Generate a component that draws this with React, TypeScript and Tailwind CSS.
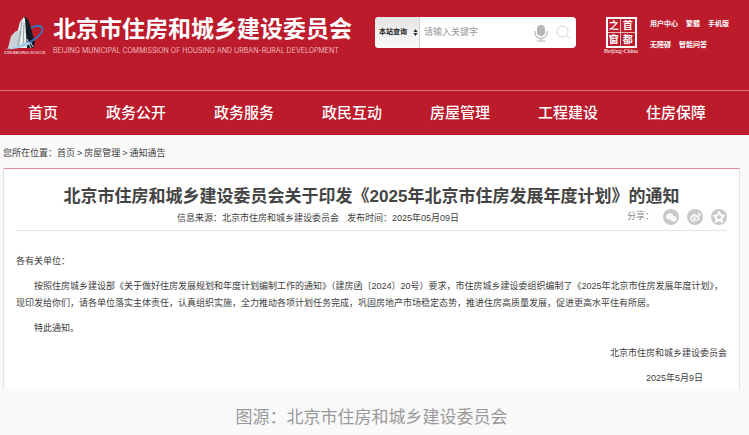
import { FaWeixin, FaWeibo } from "react-icons/fa";
import { TbStar } from "react-icons/tb";

const navItems = ["首页", "政务公开", "政务服务", "政民互动", "房屋管理", "工程建设", "住房保障"];

const topLinks = [
  ["用户中心", "繁體", "手机版"],
  ["无障碍", "智能问答"],
];

const shareLinks = [
  { name: "微信", icon: <FaWeixin size={11} /> },
  { name: "微博", icon: <FaWeibo size={11} /> },
  { name: "QQ空间", icon: <TbStar size={12} strokeWidth={4} /> },
];

const Logo = () => (
  <a href="#" className="flex w-[45px] flex-none flex-col items-center text-white">
    <svg width="42" height="33" viewBox="0 0 42 33" aria-hidden="true">
      <path d="M20 0h2l3 4 6 22-2 5H19z" fill="#111c24" />
      <path d="M20 0 16 5 9 31h14L21 2z" fill="#e9f1f1" />
      <path d="m12 14-5 5-3 12h11l3-17z" fill="#c9d3d6" />
      <path d="m18 4-4 26M20 6l-1 24" stroke="#8d9ea5" strokeWidth="1" fill="none" />
      <path d="m23 22 4 9M26 24l3 6" stroke="#d7dddd" strokeWidth="1" fill="none" />
      <path d="M27 11c5-3 10-3 11 0 2 4-6 12-18 17" fill="none" stroke="#3275bd" strokeWidth="1.8" />
      <path d="M28 26C20 31 8 33 1 32c7-1 15-4 21-7z" fill="#a9d1e5" />
    </svg>
    <span className="text-[4px] leading-[5px] whitespace-nowrap">ZJW.BEIJING.GOV.CN</span>
  </a>
);

const Search = () => (
  <form className="flex h-[31px] w-[201px] flex-none overflow-hidden rounded-[4px] bg-white">
    <label className="flex w-[45px] items-center border-r border-[#d5d5d5] bg-linear-to-b from-[#e4e4e4] to-[#fafafa]">
      <select aria-label="搜索范围" className="w-[34px] flex-none appearance-none pl-1 text-[7px] font-bold text-[#222]">
        <option>本站查询</option>
      </select>
      <svg width="5" height="7" viewBox="0 0 5 7" className="ml-1" fill="#222" aria-hidden="true">
        <path d="M2.5 0 4.5 3h-4zM2.5 7l-2-3h4z" />
      </svg>
    </label>
    <input aria-label="关键字" placeholder="请输入关键字" className="min-w-0 flex-1 pl-1 text-[9px] outline-none placeholder:text-[#999]" />
    <button type="button" aria-label="语音搜索" className="mr-2">
      <svg width="14" height="18" viewBox="0 0 14 18" fill="none" stroke="#b5b5b5" strokeWidth="1.2">
        <rect x="3" y="1" width="8" height="11" rx="4" fill="#b5b5b5" stroke="none" />
        <path d="M1 7v2c0 7 12 7 12 0V7M7 14v3M2.5 17h9" />
      </svg>
    </button>
    <button type="button" aria-label="搜索" className="mr-[5px]">
      <svg width="15" height="15" viewBox="0 0 15 15" fill="none" stroke="#d2d2d2" strokeWidth="1">
        <circle cx="6.5" cy="6.5" r="5.5" />
        <path d="m10.5 10.5 3.5 3.5" />
      </svg>
    </button>
  </form>
);

const Seal = () => (
  <a href="#" className="flex w-[34px] flex-none flex-col items-center text-white">
    <span className="grid size-[31px] grid-cols-2 grid-rows-2 border-2 border-white text-[10px] leading-[13px] font-bold">
      <span className="border-r border-b border-white/70 text-center">之</span>
      <span className="border-b border-white/70 text-center">首</span>
      <span className="border-r border-white/70 text-center">窗</span>
      <span className="text-center">都</span>
    </span>
    <span className="font-['Liberation_Serif',serif] text-[6px] leading-[6px] whitespace-nowrap">Beijing-China</span>
  </a>
);

const App = () => {
  return (
    <div className="min-h-screen bg-[#fafafa] font-['Liberation_Sans','Noto_Sans_CJK_SC',sans-serif] text-[9px] text-[#404040]">
      <header className="bg-[#bc1b2c] text-white">
        <div className="flex h-[90px] items-start justify-between pt-[17px] pr-5 pl-[2px]">
          <div className="flex">
            <Logo />
            <div className="ml-[6px]">
              <div className="text-[23px] leading-[24px] font-bold whitespace-nowrap">北京市住房和城乡建设委员会</div>
              <div className="mt-1 font-[Inter,sans-serif] text-[7px] leading-[12px] whitespace-nowrap text-[#edb9bf]">
                BEIJING MUNICIPAL COMMISSION OF HOUSING AND URBAN-RURAL DEVELOPMENT
              </div>
            </div>
          </div>

          <div className="flex flex-none">
            <Search />
            <div className="ml-7">
              <Seal />
            </div>
            <div className="ml-3 flex flex-col gap-[11px] pt-[2px] text-[7px] leading-[10px] font-bold">
              {topLinks.map((row) => (
                <div className="flex gap-2 whitespace-nowrap" key={row[0]}>
                  {row.map((el) => (
                    <a href="#" key={el}>
                      {el}
                    </a>
                  ))}
                </div>
              ))}
            </div>
          </div>
        </div>

        <nav className="flex h-[45px] items-center gap-12 border-t border-[#d4727d] px-7 text-[15px] font-medium whitespace-nowrap">
          {navItems.map((el) => (
            <a href="#" key={el}>
              {el}
            </a>
          ))}
        </nav>
      </header>

      <div className="flex h-[33px] items-center px-[3px] pt-1">
        <span>您所在位置：</span>
        <div className="flex gap-[2px]">
          <a href="#">首页</a>
          <span>&gt;</span>
          <a href="#">房屋管理</a>
          <span>&gt;</span>
          <a href="#">通知通告</a>
        </div>
      </div>

      <main className="mr-[9px] ml-[3px] border-x border-t border-x-[#e3e3e3] border-t-[#e38c97] bg-white px-3 pb-[2px]">
        <h1 className="pt-4 text-center text-[17px] leading-[24px] font-bold text-[#444]">
          北京市住房和城乡建设委员会关于印发《2025年北京市住房发展年度计划》的通知
        </h1>

        <div className="flex h-[22px] items-start border-b border-[#e3e3e3]">
          <div className="flex flex-1 justify-end gap-2 pt-[3px] leading-[12px]">
            <span>信息来源：北京市住房和城乡建设委员会</span>
            <span>发布时间：2025年05月09日</span>
          </div>
          <div className="ml-[168px] flex items-start text-[#888]">
            <span className="mr-[9px] pt-[1px] leading-[12px]">分享：</span>
            <div className="flex gap-2">
              {shareLinks.map((el) => (
                <a href="#" aria-label={el.name} key={el.name} className="flex size-4 items-center justify-center rounded-full bg-[#c8c8c8] text-white">
                  {el.icon}
                </a>
              ))}
            </div>
          </div>
        </div>

        <article className="pt-[22px] leading-[17px]">
          <p>各有关单位：</p>
          <p className="mt-2 indent-[18px]">
            按照住房城乡建设部《关于做好住房发展规划和年度计划编制工作的通知》（建房函〔2024〕20号）要求，市住房城乡建设委组织编制了《2025年北京市住房发展年度计划》，现印发给你们，请各单位落实主体责任，认真组织实施，全力推动各项计划任务完成，巩固房地产市场稳定态势，推进住房高质量发展，促进更高水平住有所居。
          </p>
          <p className="mt-2 indent-[18px]">特此通知。</p>
          <p className="mt-2 text-right">北京市住房和城乡建设委员会</p>
          <p className="mt-2 pr-6 text-right">2025年5月9日</p>
        </article>
      </main>

      <footer className="bg-[#f9f9f9] pt-4 pr-[6px] text-center text-[17px] leading-[25px] text-[#999]">图源：北京市住房和城乡建设委员会</footer>
    </div>
  );
};

export default App;
